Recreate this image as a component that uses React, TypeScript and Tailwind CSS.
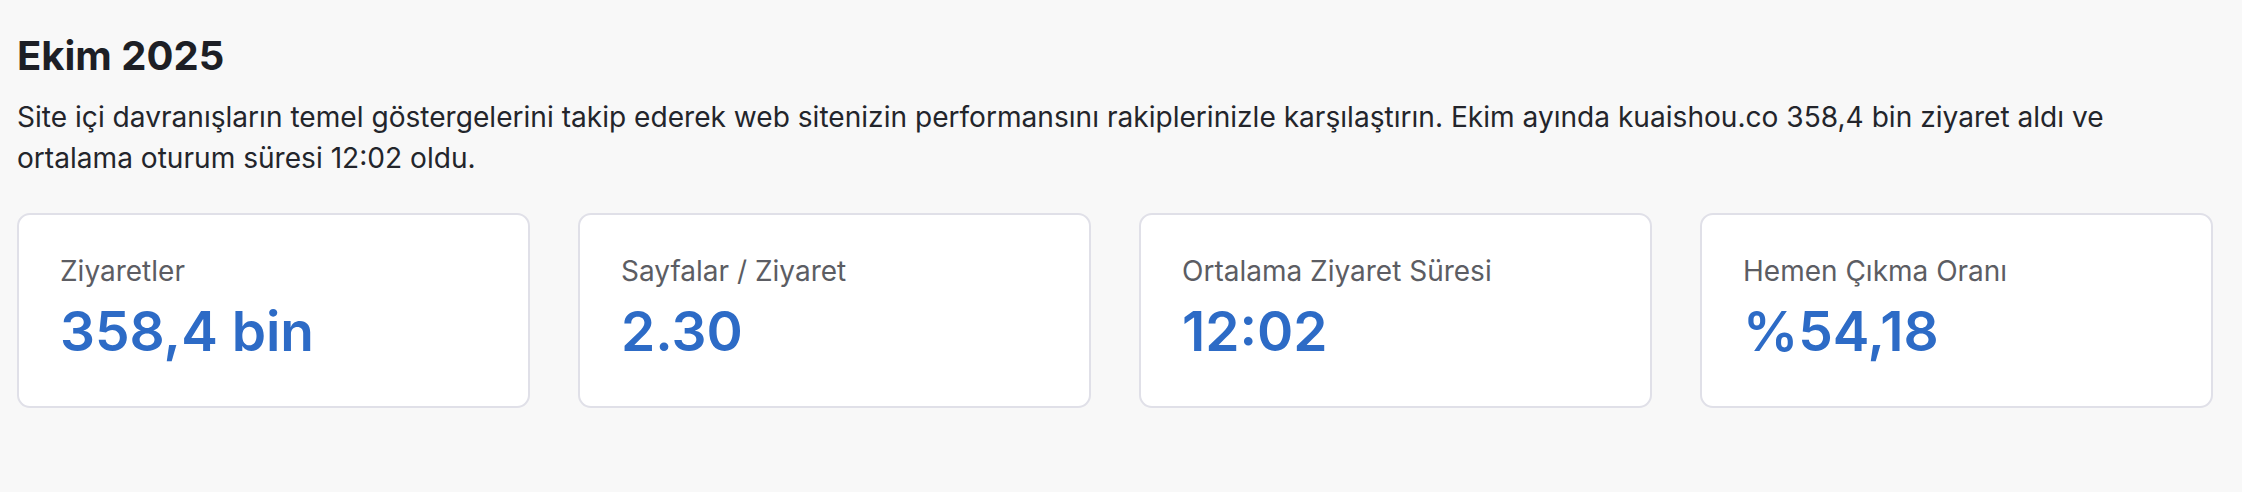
const stats = [
  { label: "Ziyaretler", value: "358,4 bin" },
  { label: "Sayfalar / Ziyaret", value: "2.30" },
  { label: "Ortalama Ziyaret Süresi", value: "12:02" },
  { label: "Hemen Çıkma Oranı", value: "%54,18" },
];

const StatCard = ({ label, value }: { label: string; value: string }) => (
  <div className="rounded-[13px] border-2 border-[#e0e0e8] bg-white px-[41px] pt-[36px] pb-[41px]">
    <div className="text-[28px] leading-[41px] text-[#5c5d63]">{label}</div>
    <div className="mt-[6px] text-[55px] font-semibold leading-[67px] text-[#2d6bc6]">
      {value}
    </div>
  </div>
);

export default function App() {
  return (
    <div
      className="min-h-[492px] bg-[#f8f8f8] pl-[17px] pr-[29px] pt-[28px]"
      style={{ fontFamily: "Inter, 'Noto Sans', sans-serif" }}
    >
      <h1 className="text-[40px] font-bold leading-[55px] text-[#1d1f25]">
        Ekim 2025
      </h1>
      <p className="mt-[14px] text-[28.1px] leading-[41.3px] text-[#23252b]">
        Site içi davranışların temel göstergelerini takip ederek web sitenizin
        performansını rakiplerinizle karşılaştırın. Ekim ayında kuaishou.co
        358,4 bin ziyaret aldı ve ortalama oturum süresi 12:02 oldu.
      </p>
      <div className="mt-[33px] grid grid-cols-4 gap-[48px]">
        {stats.map((s) => (
          <StatCard key={s.label} label={s.label} value={s.value} />
        ))}
      </div>
    </div>
  );
}
